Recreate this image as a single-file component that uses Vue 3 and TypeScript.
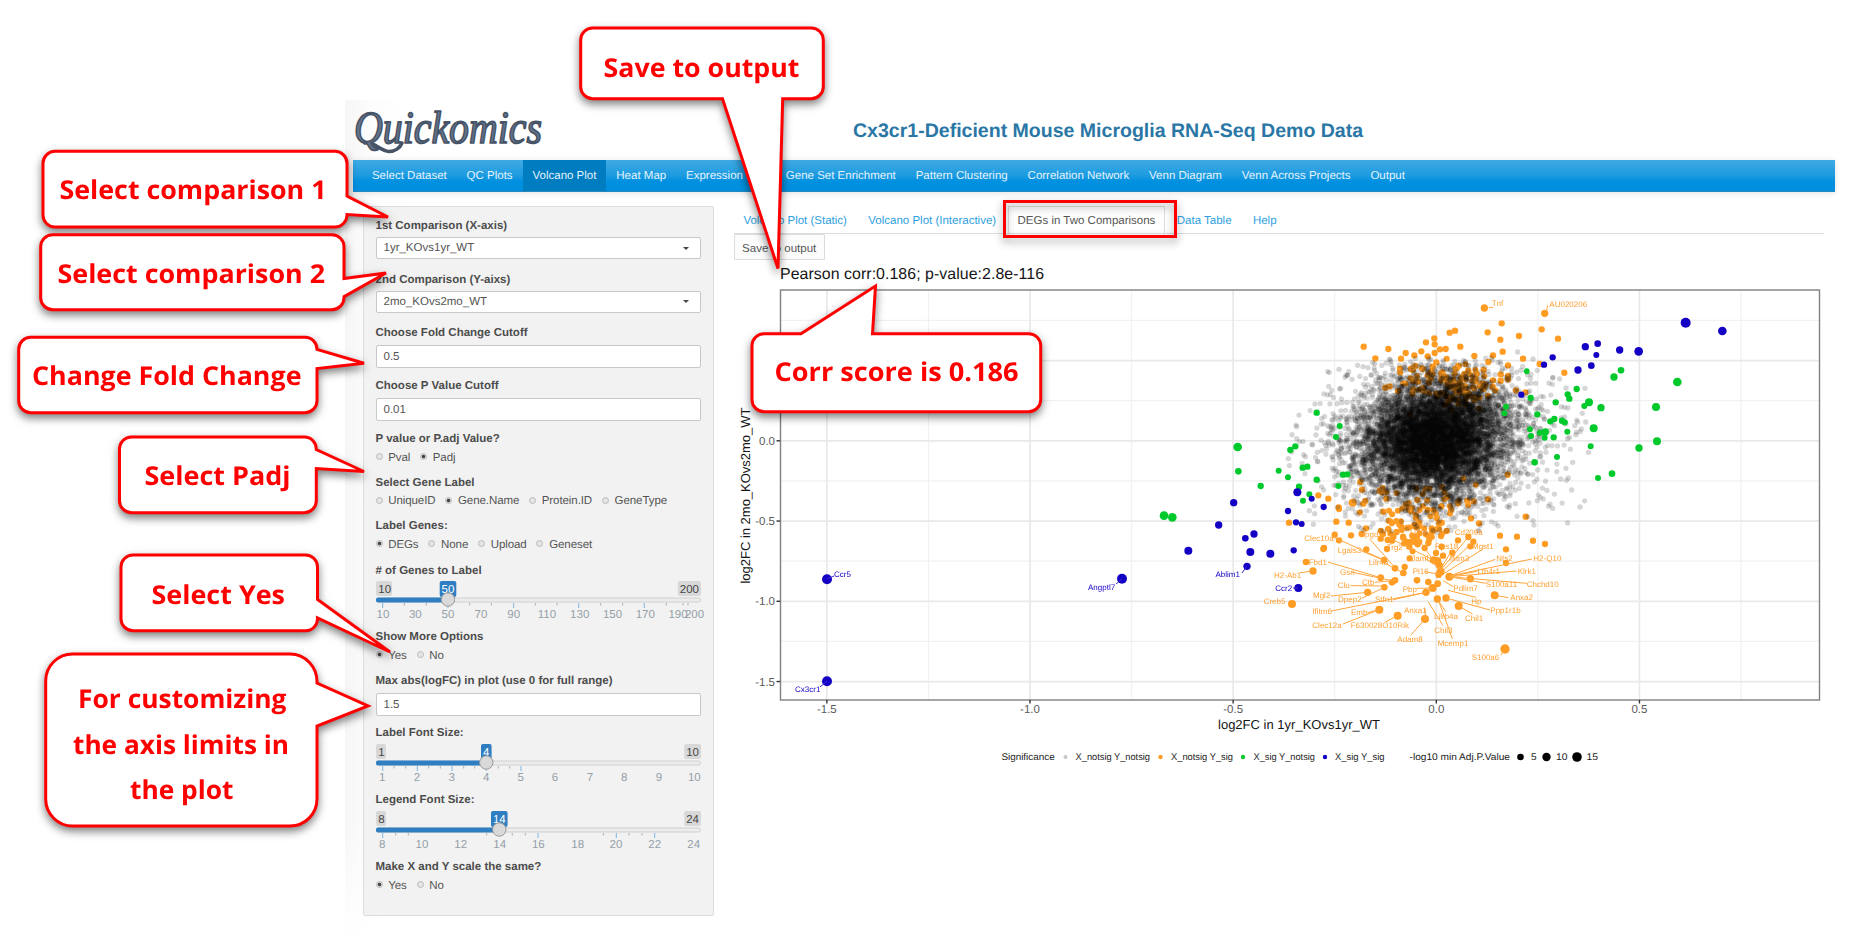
<script setup lang="ts">
import { onMounted, ref } from 'vue'

type Pt = [number, number, number?]

const navItems = [
  'Select Dataset', 'QC Plots', 'Volcano Plot', 'Heat Map', 'Expression Plot', 'Gene Set Enrichment',
  'Pattern Clustering', 'Correlation Network', 'Venn Diagram', 'Venn Across Projects', 'Output',
]
const tabs = ['Volcano Plot (Static)', 'Volcano Plot (Interactive)', 'DEGs in Two Comparisons', 'Data Table', 'Help']

interface Slider {
  min: string
  max: string
  value: string
  at: number
  big: number[]
  small: number[]
  labels: [string, number][]
}
interface Field {
  label: string
  select?: string
  input?: string
  radios?: { text: string; on?: boolean }[]
  slider?: Slider
}

const fields: Field[] = [
  { label: '1st Comparison (X-axis)', select: '1yr_KOvs1yr_WT' },
  { label: '2nd Comparison (Y-aixs)', select: '2mo_KOvs2mo_WT' },
  { label: 'Choose Fold Change Cutoff', input: '0.5' },
  { label: 'Choose P Value Cutoff', input: '0.01' },
  { label: 'P value or P.adj Value?', radios: [{ text: 'Pval' }, { text: 'Padj', on: true }] },
  {
    label: 'Select Gene Label',
    radios: [{ text: 'UniqueID' }, { text: 'Gene.Name', on: true }, { text: 'Protein.ID' }, { text: 'GeneType' }],
  },
  {
    label: 'Label Genes:',
    radios: [{ text: 'DEGs', on: true }, { text: 'None' }, { text: 'Upload' }, { text: 'Geneset' }],
  },
  {
    label: '# of Genes to Label',
    slider: {
      min: '10', max: '200', value: '50', at: 72,
      big: [6.7, 72, 137.7, 202.7, 268.3],
      small: [28.3, 50.3, 93.7, 115.3, 159.3, 181, 224.7, 246.7, 290.3, 307, 312],
      labels: [['10', 7], ['30', 39.3], ['50', 72], ['70', 105], ['90', 137.7], ['110', 171], ['130', 203.7], ['150', 236.5], ['170', 269.3], ['190', 302], ['200', 318.5]],
    },
  },
  { label: 'Show More Options', radios: [{ text: 'Yes', on: true }, { text: 'No' }] },
  { label: 'Max abs(logFC) in plot (use 0 for full range)', input: '1.5' },
  {
    label: 'Label Font Size:',
    slider: {
      min: '1', max: '10', value: '4', at: 110.3,
      big: [6.7, 41.3, 76, 110.3, 145],
      small: [18, 29.7, 52.7, 64.3, 87.7, 98.7, 122.3, 133.7],
      labels: [['1', 6.3], ['2', 41], ['3', 75.7], ['4', 110.3], ['5', 144.7], ['6', 179], ['7', 214], ['8', 248.3], ['9', 283], ['10', 318.3]],
    },
  },
  {
    label: 'Legend Font Size:',
    slider: {
      min: '8', max: '24', value: '14', at: 123.3,
      big: [6.7, 162, 240.3, 278.7],
      small: [19.7, 32.3, 110.7, 136.3, 149.3, 227.3, 253, 266],
      labels: [['8', 6.3], ['10', 46], ['12', 84.7], ['14', 123.7], ['16', 162.3], ['18', 201.7], ['20', 240], ['22', 278.7], ['24', 317.7]],
    },
  },
  { label: 'Make X and Y scale the same?', radios: [{ text: 'Yes', on: true }, { text: 'No' }] },
]

/* Plot scales */
const sx = (v: number) => 1436.3 + v * 406.3
const sy = (v: number) => 440.8 - v * 160.5
const xMajor = [-1.5, -1, -0.5, 0, 0.5]
const xMinor = [-1.25, -0.75, -0.25, 0.25, 0.75]
const yMajor = [0.5, 0, -0.5, -1, -1.5]
const yMinor = [0.75, 0.25, -0.25, -0.75, -1.25]

/* Points are kept on a fine grid, three units to a pixel, with its origin at (1260, 270). */
const orange: Pt[] = [
  [673, 114, 11], [854, 130, 11], [725, 160], [683, 187], [845, 178], [894, 206], [777, 198], [721, 209], [585, 182], [569, 188],
  [523, 205], [498, 217], [524, 223], [601, 230], [540, 238], [557, 237], [484, 244], [524, 249], [437, 249], [311, 230], [385, 237],
  [346, 265], [423, 266], [463, 256], [503, 259], [643, 258], [699, 256], [728, 245], [789, 266], [685, 276], [744, 286], [839, 282], [913, 308],
  [420, 296], [455, 296], [466, 288], [488, 297], [518, 290], [529, 277], [595, 288], [625, 301], [671, 300], [650, 312], [722, 313], [744, 318],
  [744, 328], [699, 331], [722, 332], [668, 340], [660, 348], [648, 330], [676, 345], [698, 350], [706, 361], [768, 361], [796, 367], [684, 378],
  [452, 325], [460, 334], [474, 335], [490, 354], [503, 316], [376, 353], [389, 349], [414, 363], [457, 371],
  [743, 614], [359, 662], [175, 676], [205, 686], [278, 698, 12], [301, 636], [306, 659], [236, 712], [316, 693], [310, 701], [379, 686],
  [370, 725], [237, 717], [684, 688], [594, 700], [622, 692], [641, 694], [797, 740], [633, 745], [87, 758],
  [229, 755], [266, 758], [224, 794], [273, 796], [237, 811], [192, 834], [190, 837], [318, 775], [305, 792], [362, 806], [369, 792],
  [387, 752], [396, 757], [383, 810], [396, 812], [423, 769], [468, 744], [573, 719], [530, 744], [478, 758], [478, 768], [537, 760], [545, 758],
  [657, 760], [720, 797], [771, 800], [819, 812], [855, 822], [738, 838], [738, 879], [625, 801], [594, 811], [640, 815], [631, 829],
  [577, 848], [549, 857], [528, 849], [138, 876, 10], [159, 903, 11], [96, 1002, 12], [319, 838], [381, 837], [372, 870, 10], [405, 895, 10],
  [434, 891], [430, 909, 10], [449, 865], [362, 923, 10], [405, 931, 10], [396, 937, 10], [373, 952, 10], [323, 967, 11], [358, 1019, 12],
  [413, 1037, 12], [471, 931, 10], [505, 936, 10], [498, 967, 11], [495, 1047, 12], [518, 954, 12], [533, 941, 10], [532, 987, 11], [558, 984, 11],
  [542, 905, 12], [536, 914, 10], [568, 920, 12], [596, 1008, 12], [631, 926, 11], [704, 976, 12], [735, 1137, 14], [520, 870, 11], [532, 873, 12],
  [538, 886, 11], [560, 783], [543, 798], [516, 786], [505, 819], [494, 834], [448, 830], [473, 823], [457, 797], [430, 803], [410, 786],
  [400, 800], [545, 830], [459, 815], [471, 800], [503, 720], [520, 720], [448, 718], [472, 690], [502, 691], [438, 703],
]
const blue: Pt[] = [
  [878, 262], [852, 284], [954, 300, 11], [784, 374], [112, 667, 12], [155, 686, 9], [191, 711], [84, 723], [108, 757], [125, 762, 9],
  [101, 841], [31, 851, 12], [115, 954, 12], [976, 230, 11], [1013, 221, 10], [1009, 255, 9], [1079, 240, 11], [1136, 244, 13],
  [994, 287, 10], [1277, 158, 15], [1387, 183, 13],
  [-1299, 928, 15], [-1299, 1234, 15], [-414, 926, 15], [-39, 889, 11], [-215, 842, 12], [-29, 846, 12], [-44, 805, 10], [-18, 792, 11],
  [-124, 765, 11], [-79, 698, 11],
]
const green: Pt[] = [
  [170, 428], [239, 468, 9], [228, 501, 9], [106, 529], [91, 540], [56, 602, 9], [84, 622, 9], [128, 593], [142, 590], [170, 629], [117, 650],
  [148, 673, 9], [129, 692, 9], [2, 648], [249, 614], [262, 613], [235, 648, 9], [812, 384], [800, 304, 9], [738, 410, 9], [733, 430, 9],
  [887, 397], [832, 433], [871, 454], [883, 447], [906, 452], [914, 457], [881, 502], [810, 478, 9], [813, 498, 9], [840, 488], [856, 486, 11],
  [854, 503, 9], [922, 485, 9], [891, 561, 9], [824, 577, 10], [923, 373], [928, 386], [950, 357], [987, 397, 12], [973, 408, 9], [1023, 413, 11],
  [1062, 321, 11], [1083, 301, 10], [1252, 336, 13], [1188, 411, 12], [1001, 475, 12], [992, 529, 9], [1137, 534, 11], [1191, 514, 12],
  [1056, 611, 10], [1014, 624, 9], [-67, 531, 13], [-65, 604, 10], [-288, 737, 13], [-263, 742, 13],
]
const loneGray: Pt[] = [
  [237, 298], [276, 328], [215, 361], [242, 355], [110, 470], [110, 506], [168, 495], [136, 560], [85, 566], [173, 575], [172, 547],
  [773, 246], [819, 267], [878, 324], [877, 343], [918, 354], [975, 355], [967, 430], [953, 456], [977, 456], [964, 477], [948, 494],
  [928, 502], [923, 506], [985, 547], [938, 577], [925, 624], [902, 627], [919, 631], [935, 660], [960, 711], [878, 715], [832, 692],
  [861, 661], [148, 722], [164, 731], [160, 763], [707, 761], [819, 752], [766, 701], [833, 600], [850, 440], [862, 424], [904, 410], [914, 412], [924, 414],
]

/* Gene labels: text, left edge, baseline */
const genes: [string, number, number][] = [
  ['Tnf', 695, 107], ['AU020206', 868, 110],
  ['Clec10a', 133, 812], ['Hpgds', 298, 802], ['Lgals3', 233, 849], ['Fbd1', 146, 884], ['Lilr4b', 326, 886], ['H2-Ab1', 42, 923],
  ['Gsn', 240, 914], ['Clu', 233, 954], ['Ctb', 306, 946], ['Mgl2', 159, 985], ['Dpep2', 234, 996], ['Stfn1', 345, 997],
  ['Ifitm6', 157, 1031], ['Emb', 273, 1036], ['Clec12a', 157, 1073], ['F630028O10Rik', 272, 1073], ['Creb5', 11, 1002],
  ['Adam8', 412, 1116], ['Anxa1', 432, 1030], ['Lilrb4a', 522, 1048], ['Chil3', 523, 1090], ['Mcemp1', 533, 1128], ['S100a6', 635, 1170],
  ['Chil1', 615, 1052], ['Ppp1r1b', 691, 1029], ['Anxa2', 751, 991], ['Hp', 634, 1001], ['Pdlim7', 580, 962], ['Chchd10', 800, 950],
  ['S100a11', 677, 950], ['Klrk1', 773, 911], ['Ltb4r1', 652, 911], ['H2-Q10', 820, 874], ['Nts2', 709, 874], ['Mgst1', 636, 836],
  ['Cd209a', 584, 796], ['Rps18', 525, 836], ['Ifitm3', 569, 872], ['Jaml', 454, 873], ['Pi16', 458, 911], ['Pbp', 428, 967], ['Trg2', 380, 840],
  ['Lyz2', 450, 796],
]
const leaders = [
  [686, 113, 699, 112], [860, 121, 863, 106], [217, 800, 372, 870], [330, 808, 405, 893], [305, 843, 372, 871], [204, 876, 362, 923],
  [376, 880, 430, 909], [120, 908, 159, 903], [274, 906, 396, 932], [272, 947, 373, 948], [345, 937, 405, 931], [212, 978, 323, 967],
  [305, 985, 373, 952], [400, 989, 498, 967], [213, 1023, 498, 967], [322, 1028, 358, 1019], [249, 1062, 358, 1019], [376, 1056, 413, 1037],
  [452, 1096, 495, 1047], [495, 1015, 497, 1047], [557, 1025, 532, 987], [549, 1066, 505, 996], [577, 1106, 535, 990], [722, 1156, 735, 1137],
  [638, 1032, 596, 1008], [690, 1020, 558, 984], [746, 983, 704, 976], [648, 982, 564, 961], [580, 950, 550, 932], [800, 940, 568, 920],
  [677, 940, 568, 920], [770, 903, 568, 920], [650, 904, 568, 920], [816, 867, 568, 918], [706, 868, 568, 918], [668, 838, 553, 910],
  [625, 801, 542, 900], [640, 815, 545, 905], [470, 800, 540, 900], [400, 810, 520, 870], [570, 850, 540, 900], [494, 864, 540, 895],
  [494, 905, 540, 913], [470, 955, 518, 954],
]
const blueGenes: [string, number, number][] = [
  ['Ccr5', 834, 576.5], ['Cx3cr1', 795, 692], ['Angptl7', 1088, 589.5], ['Ablim1', 1215.5, 576.5], ['Ccr2', 1275.3, 591],
]
const blueLeaders = [
  [827, 579, 834, 576], [827, 681, 820, 687], [1122, 579, 1116, 584], [1247, 566, 1242, 573], [1298, 588, 1293, 588],
]

const cloud = ref<HTMLCanvasElement | null>(null)

/** Small seeded generator, so that the cloud is the same on every load. */
function makeRandom(seed: number) {
  let s = seed
  const next = () => {
    s = (s * 1664525 + 1013904223) >>> 0
    return s / 4294967296
  }
  const gauss = () => Math.sqrt(-2 * Math.log(next() + 1e-9)) * Math.cos(2 * Math.PI * next())
  return { next, gauss }
}

onMounted(() => {
  const ctx = cloud.value?.getContext('2d')
  if (!ctx) return
  const rnd = makeRandom(20417)
  const dot = (x: number, y: number, r: number) => {
    ctx.beginPath()
    ctx.arc(x, y, r, 0, Math.PI * 2)
    ctx.fill()
  }
  ctx.translate(-1260, -290)
  ctx.fillStyle = '#ff9c24'
  for (let i = 0; i < 75; i++) dot(1459 + rnd.gauss() * 13, 386 + rnd.gauss() * 11, 3)
  for (let i = 0; i < 22; i++) dot(1422 + rnd.gauss() * 14, 382 + rnd.gauss() * 10, 3)
  for (let i = 0; i < 32; i++) dot(1417 + rnd.gauss() * 28, 503 + rnd.gauss() * 11, 3)
  for (let i = 0; i < 36; i++) dot(1413 + rnd.gauss() * 16, 532 + rnd.gauss() * 9, 3)
  for (const [a, b, r] of orange) dot(1260 + a / 3, 270 + b / 3, (r ?? 9.5) / 3)
  ctx.fillStyle = 'rgba(0, 0, 0, 0.16)'
  for (let i = 0; i < 9500; i++) {
    const tail = i % 5 === 0
    const g = rnd.gauss()
    const x = 1435 + g * (tail ? 56 : 35)
    const y = 439 - g * 3 + rnd.gauss() * (tail ? 41 : 28)
    if (y < 356 + rnd.next() * 8 || y > 533 || x < 1285 || x > 1585) continue
    dot(x, y, 2.6)
  }
  for (const [a, b] of loneGray) dot(1260 + a / 3, 270 + b / 3, 2.7)
})

const legend: { text: string; x: number; w: number; dot?: number; r?: number; color?: string }[] = [
  { text: 'Significance', x: 1001.4, w: 53.3 },
  { text: 'X_notsig Y_notsig', x: 1075.6, w: 74.4, dot: 1065.5, r: 2, color: '#c6c6c6' },
  { text: 'X_notsig Y_sig', x: 1171, w: 62, dot: 1160.5, r: 2.2, color: '#ff9c24' },
  { text: 'X_sig Y_notsig', x: 1253.5, w: 61.5, dot: 1243, r: 2.2, color: '#00c92c' },
  { text: 'X_sig Y_sig', x: 1335, w: 49.5, dot: 1325, r: 2.2, color: '#1400c4' },
  { text: '-log10 min Adj.P.Value', x: 1409.5, w: 100.5 },
  { text: '5', x: 1531, w: 5.6, dot: 1520.5, r: 3.3, color: '#000' },
  { text: '10', x: 1556, w: 11.5, dot: 1546.5, r: 4.2, color: '#000' },
  { text: '15', x: 1586.5, w: 11.5, dot: 1577, r: 4.8, color: '#000' },
]

const callouts: { d: string; lines: [string, number, number, number][] }[] = [
  {
    d: 'M55 151.3H335A12 12 0 0 1 347 163.3V196L388 217L347 214.5V215A12 12 0 0 1 335 227H55A12 12 0 0 1 43 215V163.3A12 12 0 0 1 55 151.3Z',
    lines: [['Select comparison 1', 59.5, 199.3, 267]],
  },
  {
    d: 'M52.7 234.7H332A12 12 0 0 1 344 246.7V278.5L386 273L344 296.7V297.7A12 12 0 0 1 332 309.7H52.7A12 12 0 0 1 40.7 297.7V246.7A12 12 0 0 1 52.7 234.7Z',
    lines: [['Select comparison 2', 57.5, 282.5, 267.5]],
  },
  {
    d: 'M30.7 337.3H305A12 12 0 0 1 317 349.5L364 363.3L317 368.5V400.7A12 12 0 0 1 305 412.7H30.7A12 12 0 0 1 18.7 400.7V349.3A12 12 0 0 1 30.7 337.3Z',
    lines: [['Change Fold Change', 32, 385.3, 269.5]],
  },
  {
    d: 'M131.5 437H304.3A12 12 0 0 1 316.3 449.5L364 471.5L316.3 468.5V500.7A12 12 0 0 1 304.3 512.7H131.5A12 12 0 0 1 119.5 500.7V449A12 12 0 0 1 131.5 437Z',
    lines: [['Select Padj', 144.5, 485, 146]],
  },
  {
    d: 'M133 555H305.5A12 12 0 0 1 317.5 567V599.5L390 652L317.5 618A12 12 0 0 1 305.5 630.7H133A12 12 0 0 1 121 618.7V567A12 12 0 0 1 133 555Z',
    lines: [['Select Yes', 151.5, 603.7, 133.5]],
  },
  {
    d: 'M73 654H290A27 28 0 0 1 317 683L368 706L317 726V799A27 27 0 0 1 290 826H73A27 27 0 0 1 45.7 799V681A27 27 0 0 1 73 654Z',
    lines: [['For customizing', 78, 707.7, 208.5], ['the axis limits in', 73, 753.5, 216], ['the plot', 130, 798.8, 103.5]],
  },
  {
    d: 'M592.7 28H811.3A12 12 0 0 1 823.3 40V86.7A12 12 0 0 1 811.3 98.7H782.7L778 268.5L722.5 98.7H592.7A12 12 0 0 1 580.7 86.7V40A12 12 0 0 1 592.7 28Z',
    lines: [['Save to output', 603.5, 76.7, 196]],
  },
  {
    d: 'M764 333.7H801L875.5 286L872.5 333.7H1028.7A12 12 0 0 1 1040.7 345.7V399.7A12 12 0 0 1 1028.7 411.7H764A12 12 0 0 1 752 399.7V345.7A12 12 0 0 1 764 333.7Z',
    lines: [['Corr score is 0.186', 774.5, 381.3, 244]],
  },
]

const radius = (p: Pt) => (p[2] ?? 9.5) / 3
const px = (p: Pt) => 1260 + p[0] / 3
const py = (p: Pt) => 270 + p[1] / 3
</script>

<template>
  <div class="page">
    <div class="app">
      <header class="head">
        <svg class="logo" viewBox="0 0 192 54" width="192" height="54">
          <defs>
            <linearGradient id="slate" x1="0" y1="0" x2="0" y2="1">
              <stop offset="0" stop-color="#8b98ab" />
              <stop offset="0.5" stop-color="#5f6e83" />
              <stop offset="1" stop-color="#3d4a5d" />
            </linearGradient>
          </defs>
          <path class="swash" d="M12 42C21 40 27 50 36 50.5C42 50.5 47 47 49 42" />
          <text x="1" y="42" textLength="188" lengthAdjust="spacingAndGlyphs">Quickomics</text>
        </svg>
        <h1>Cx3cr1-Deficient Mouse Microglia RNA-Seq Demo Data</h1>
      </header>

      <nav class="nav">
        <span v-for="n in navItems" :key="n" :class="{ active: n === 'Volcano Plot' }">{{ n }}</span>
      </nav>

      <div class="body">
        <aside class="side">
          <div v-for="f in fields" :key="f.label" class="field">
            <label>{{ f.label }}</label>
            <div v-if="f.select" class="select"><span>{{ f.select }}</span><i class="caret"></i></div>
            <div v-if="f.input" class="input">{{ f.input }}</div>
            <div v-if="f.radios" class="radios">
              <span v-for="r in f.radios" :key="r.text" class="radio"><i :class="{ on: r.on }"></i>{{ r.text }}</span>
            </div>
            <svg v-if="f.slider" class="slider" width="325" height="42" viewBox="0 0 325 42">
              <rect class="end" x="0" y="0" :width="f.slider.min.length * 6 + 4" height="15" rx="2" />
              <text class="end-t" x="2.3" y="12">{{ f.slider.min }}</text>
              <rect class="end" :x="321 - f.slider.max.length * 6.4" y="0" :width="f.slider.max.length * 6.4 + 4" height="15" rx="2" />
              <text class="end-t" x="323" y="12" text-anchor="end">{{ f.slider.max }}</text>
              <rect class="val" :x="f.slider.at - f.slider.value.length * 3 - 2.3" y="0" :width="f.slider.value.length * 6 + 4.6" height="16" rx="2" />
              <text class="val-t" :x="f.slider.at" y="12" text-anchor="middle">{{ f.slider.value }}</text>
              <rect class="track" x="0.5" y="17" width="324" height="4" rx="2" />
              <rect class="fill" x="0" y="16.5" :width="f.slider.at" height="5" rx="2" />
              <path v-for="b in f.slider.big" :key="'b' + b" class="big" :d="`M${b} 22v5`" />
              <path v-for="s in f.slider.small" :key="'s' + s" class="small" :d="`M${s} 22v2.5`" />
              <circle class="knob" :cx="f.slider.at" cy="18.5" r="6.7" />
              <text v-for="[t, x] in f.slider.labels" :key="t" class="num" :x="x" y="37.3" text-anchor="middle">{{ t }}</text>
            </svg>
          </div>
        </aside>

        <main class="main">
          <div class="tabs">
            <span v-for="t in tabs" :key="t" :class="{ active: t === 'DEGs in Two Comparisons' }">{{ t }}</span>
          </div>
          <button class="save">Save to output</button>
          <div class="plot">
            <svg class="chart" viewBox="734 261 1100 520" width="1100" height="520">
              <path v-for="v in xMinor" :key="'xm' + v" class="minor" :d="`M${sx(v)} 290V700`" />
              <path v-for="v in yMinor" :key="'ym' + v" class="minor" :d="`M780 ${sy(v)}H1820`" />
              <path v-for="v in xMajor" :key="'xM' + v" class="major" :d="`M${sx(v)} 290V700`" />
              <path v-for="v in yMajor" :key="'yM' + v" class="major" :d="`M780 ${sy(v)}H1820`" />
              <rect class="frame" x="780.5" y="290" width="1039" height="410" />
              <path v-for="v in xMajor" :key="'xt' + v" class="tick" :d="`M${sx(v)} 700v3.5`" />
              <path v-for="v in yMajor" :key="'yt' + v" class="tick" :d="`M776.5 ${sy(v)}h3.5`" />
              <text v-for="v in xMajor" :key="'xl' + v" class="axis" :x="sx(v)" y="713.2" text-anchor="middle">{{ v.toFixed(1) }}</text>
              <text v-for="v in yMajor" :key="'yl' + v" class="axis" x="775" :y="sy(v) + 4" text-anchor="end">{{ v.toFixed(1) }}</text>
              <text class="title" x="780" y="279.2" textLength="264">Pearson corr:0.186; p-value:2.8e-116</text>
              <text class="axis-title" x="1218" y="728.5" textLength="162">log2FC in 1yr_KOvs1yr_WT</text>
              <text class="axis-title" transform="translate(749.5 583.5) rotate(-90)" textLength="176">log2FC in 2mo_KOvs2mo_WT</text>
              <g v-for="l in legend" :key="l.text">
                <circle v-if="l.dot" :cx="l.dot" cy="757" :r="l.r" :fill="l.color" />
                <text class="legend" :x="l.x" y="760.3" :textLength="l.w" lengthAdjust="spacingAndGlyphs">{{ l.text }}</text>
              </g>
            </svg>
            <canvas ref="cloud" class="cloud" width="360" height="410"></canvas>
            <svg class="chart over" viewBox="734 261 1100 520" width="1100" height="520">
              <circle v-for="(p, i) in green" :key="'g' + i" class="green" :cx="px(p)" :cy="py(p)" :r="radius(p)" />
              <circle v-for="(p, i) in blue" :key="'b' + i" class="blue" :cx="px(p)" :cy="py(p)" :r="radius(p)" />
              <path v-for="(l, i) in leaders" :key="'l' + i" class="leader" :d="`M${1260 + l[0] / 3} ${270 + l[1] / 3}L${1260 + l[2] / 3} ${270 + l[3] / 3}`" />
              <path v-for="(l, i) in blueLeaders" :key="'bl' + i" class="leader blue-line" :d="`M${l[0]} ${l[1]}L${l[2]} ${l[3]}`" />
              <text v-for="[t, x, y] in genes" :key="t" class="gene" :x="1260 + x / 3" :y="270 + y / 3">{{ t }}</text>
              <text v-for="[t, x, y] in blueGenes" :key="t" class="gene blue" :x="x" :y="y">{{ t }}</text>
            </svg>
          </div>
        </main>
      </div>
    </div>

    <svg class="callouts" width="1865" height="945" viewBox="0 0 1865 945">
      <rect class="mark" x="1004.5" y="201.5" width="171" height="35" />
      <g v-for="c in callouts" :key="c.d">
        <path class="bubble" :d="c.d" />
        <text v-for="[t, x, y, w] in c.lines" :key="t" :x="x" :y="y" :textLength="w" lengthAdjust="spacingAndGlyphs">{{ t }}</text>
      </g>
    </svg>
  </div>
</template>

<style>
body {
  margin: 0;
  background: #fff;
}
</style>

<style scoped>
.page {
  position: relative;
  width: 1865px;
  height: 945px;
  overflow: hidden;
  background: #fff;
  font-family: "Liberation Sans", Arial, sans-serif;
  font-size: 11.5px;
  color: #555;
  text-rendering: geometricPrecision;
}
.app {
  box-sizing: border-box;
  margin-left: 345px;
  padding: 100px 30px 0 8px;
  height: 945px;
  background:
    linear-gradient(rgba(255, 255, 255, 0) 85%, #fff) 0 100px / 100% 840px no-repeat,
    linear-gradient(90deg, #f6f6f6, #fdfdfd 28px, #fff 60px) 0 100px / 100% 840px no-repeat;
}
.head {
  display: flex;
  height: 60px;
}
.logo {
  margin-top: 1px;
  overflow: visible;
}
.logo text {
  font: italic 46px "Liberation Serif", serif;
  fill: #64738a;
  stroke: #465366;
  stroke-width: 1.7;
  stroke-linejoin: round;
}
.swash {
  fill: none;
  stroke: #465366;
  stroke-width: 3.6;
  stroke-linecap: round;
}
h1 {
  margin: 18.5px 0 0 308px;
  font-size: 19.55px;
  line-height: 24px;
  color: #2a77a6;
  white-space: nowrap;
}
.nav {
  display: flex;
  width: 1472.5px;
  height: 31px;
  padding-left: 9px;
  background: linear-gradient(#40aae4, #1d9be0 50%, #0090e0 70%, #008fde);
  border-bottom: 1px solid #2788c0;
  box-shadow: 0 1px 6px rgba(0, 0, 0, 0.12);
}
.nav span {
  padding: 1px 9.95px 0;
  line-height: 30.5px;
  height: 30px;
  color: #e2f3fd;
  white-space: nowrap;
}
.nav .active {
  background: #007cc0;
}
.body {
  display: flex;
  gap: 20.2px;
  padding: 13.5px 0 0 10px;
}
.side {
  box-sizing: border-box;
  width: 350.5px;
  height: 710px;
  padding: 12.3px 12px 0 11.5px;
  border: 1px solid #dcdcdc;
  border-radius: 2px;
  background: #f2f2f2;
  display: grid;
  grid-template-rows: 53.8px 53.7px 53px 52.5px 43.8px 43.5px 44.7px 66.2px 44.2px 52.2px 66.8px 66.8px 40px;
}
.field label {
  display: block;
  height: 18.6px;
  line-height: 14px;
  font-weight: bold;
  color: #4c4c4c;
}
.select,
.input {
  box-sizing: border-box;
  width: 325px;
  height: 21.5px;
  padding: 0 11px 0 7px;
  border: 1px solid #c8c8c8;
  border-radius: 2px;
  background: #fff;
  line-height: 18.5px;
}
.input {
  height: 23.5px;
  line-height: 23.5px;
}
.select {
  display: flex;
  justify-content: space-between;
  align-items: center;
}
.caret {
  border: 3px solid transparent;
  border-top-color: #444;
  border-bottom: 0;
}
.radios {
  display: flex;
  gap: 9.8px;
  line-height: 14px;
  letter-spacing: -0.08px;
  padding-top: 0.3px;
}
.radio {
  display: flex;
  gap: 5.7px;
}
.radio i {
  box-sizing: border-box;
  width: 7px;
  height: 7px;
  margin-top: 2.3px;
  border: 1px solid #bbb;
  border-radius: 50%;
  background: #e4e4e4;
}
.radio i.on {
  background: radial-gradient(circle, #444 1.3px, #dcdcdc 2.2px);
}
.slider {
  display: block;
  overflow: visible;
  margin-top: -1px;
}
.slider text {
  font-size: 11.5px;
}
.end {
  fill: #d8d8d8;
}
.end-t {
  fill: #444;
}
.val,
.fill {
  fill: #2f7ec1;
}
.val-t {
  fill: #fff;
}
.track {
  fill: #ececec;
  stroke: #cfcfcf;
}
.big {
  stroke: #7ab6e6;
}
.small {
  stroke: #b0b0b0;
}
.knob {
  fill: #d9d9d9;
  stroke: #999;
}
.num {
  fill: #94a0a8;
}
.main {
  width: 1090px;
}
.tabs {
  display: flex;
  gap: 2px;
  height: 27.5px;
  border-bottom: 1px solid #ddd;
}
.tabs span {
  height: 27px;
  padding: 0 8.7px;
  border: 1px solid transparent;
  border-bottom: 0;
  line-height: 28.5px;
  color: #2f9fe0;
  white-space: nowrap;
}
.tabs .active {
  height: 27.5px;
  border-color: #ddd;
  border-bottom: 1px solid #fff;
  color: #555;
}
.save {
  display: block;
  width: 91px;
  height: 26px;
  margin: 0 0 0.5px;
  padding: 1.5px 0 0;
  border: 1px solid #dcdcdc;
  border-radius: 1px;
  background: #fcfcfc;
  font: inherit;
  color: #555;
}
.plot {
  position: relative;
  height: 520px;
}
.chart {
  display: block;
}
.over {
  position: absolute;
  left: 0;
  top: 0;
}
.cloud {
  position: absolute;
  left: 526px;
  top: 29px;
}
.chart path,
.chart .frame {
  fill: none;
}
.minor {
  stroke: #f1f1f1;
  stroke-width: 1.2;
}
.major {
  stroke: #e9e9e9;
  stroke-width: 1.7;
}
.frame {
  stroke: #808080;
  stroke-width: 1.4;
}
.tick {
  stroke: #333;
  stroke-width: 1.4;
}
.axis {
  font-size: 11.5px;
  fill: #5a5a5a;
}
.title {
  font-size: 15.9px;
  fill: #151515;
}
.axis-title {
  font-size: 13px;
  fill: #151515;
}
.legend {
  font-size: 9.7px;
  fill: #222;
}
.gene {
  font-size: 8px;
  fill: #ff9f30;
}
.leader {
  stroke: #ffa53c;
  stroke-width: 1;
}
.blue-line {
  stroke: #3a2cd0;
}
.green {
  fill: #00c92c;
}
.blue {
  fill: #1400c4;
}
.callouts {
  position: absolute;
  left: 0;
  top: 0;
}
.bubble {
  fill: #fff;
  stroke: #f00;
  stroke-width: 3;
  stroke-linejoin: miter;
  filter: drop-shadow(0 4px 4px rgba(0, 0, 0, 0.5));
}
.mark {
  fill: none;
  stroke: #f00;
  stroke-width: 3;
  filter: drop-shadow(0 4px 4px rgba(0, 0, 0, 0.4));
}
.callouts text {
  font: bold 26px "Open Sans", "Noto Sans", sans-serif;
  fill: #f00;
}
</style>
